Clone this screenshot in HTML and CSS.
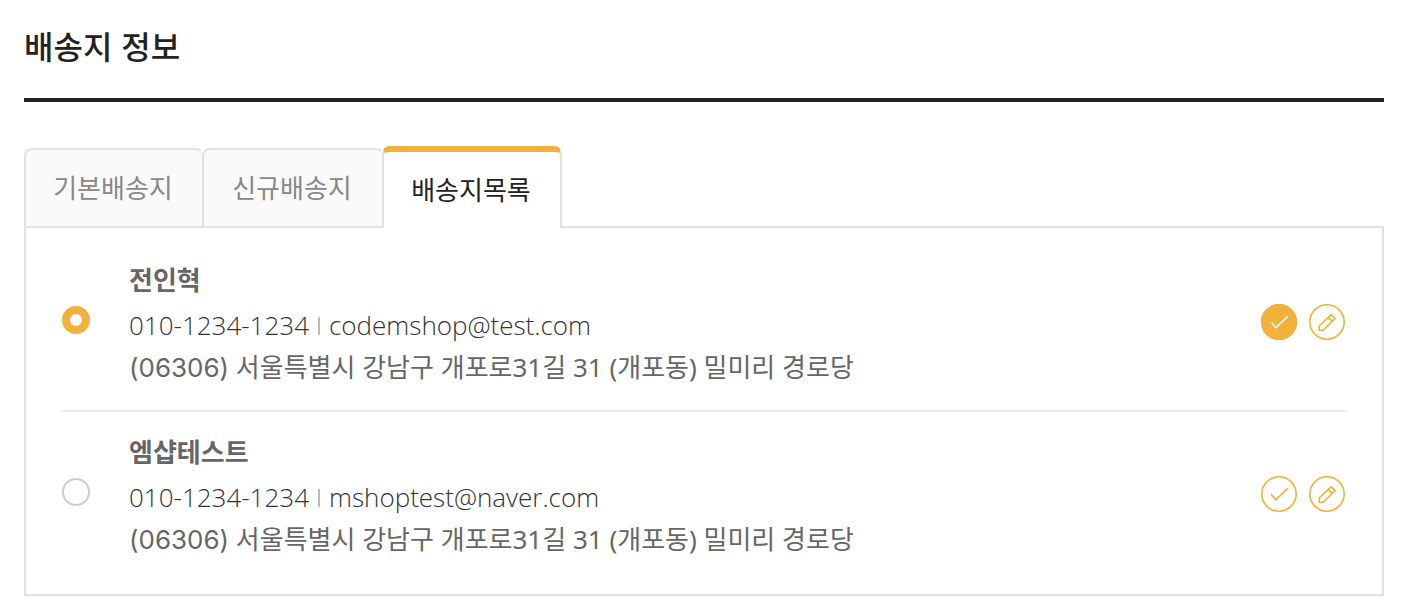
FILE: index.html
```html
<!DOCTYPE html>
<html lang="ko">
<head>
<meta charset="utf-8">
<meta name="viewport" content="width=device-width, initial-scale=1">
<title>배송지 정보</title>
<link rel="stylesheet" href="styles.css">
</head>
<body>
<svg class="symbols" aria-hidden="true">
  <symbol id="check" viewBox="0 0 36 36"><circle cx="18" cy="18" r="17.2"/><path d="M10 18.300L15 23.500L26.800 12.300"/></symbol>
  <symbol id="pencil" viewBox="0 0 36 36"><circle cx="18" cy="18" r="17.2"/><path d="M10.200 26.200V22L22.200 10.600L26.100 14.600L14.200 26.200ZM19.200 13.400L23.200 17.400"/></symbol>
</svg>
<main class="shipping">
  <h1 class="title">배송지 정보</h1>
  <div class="tabs" role="tablist">
    <button class="tab" type="button" role="tab">기본배송지</button>
    <button class="tab" type="button" role="tab">신규배송지</button>
    <button class="tab tab-active" type="button" role="tab" aria-selected="true">배송지목록</button>
  </div>
  <div class="panel" role="tabpanel">
    <div class="address">
      <input class="radio" type="radio" name="address" id="address-1" checked>
      <label class="details" for="address-1">
        <strong class="name">전인혁</strong>
        <span class="contact">010-1234-1234<span class="divider"></span>codemshop@test.com</span>
        <span class="line"><span class="postcode">(06306)</span> 서울특별시 강남구 개포로31길 31 (개포동) 밀미리 경로당</span>
      </label>
      <div class="actions">
        <button class="action action-on" type="button" aria-label="기본 배송지"><svg class="icon"><use href="#check"/></svg></button>
        <button class="action" type="button" aria-label="수정"><svg class="icon"><use href="#pencil"/></svg></button>
      </div>
    </div>
    <div class="address">
      <input class="radio" type="radio" name="address" id="address-2">
      <label class="details" for="address-2">
        <strong class="name">엠샵테스트</strong>
        <span class="contact">010-1234-1234<span class="divider"></span>mshoptest@naver.com</span>
        <span class="line"><span class="postcode">(06306)</span> 서울특별시 강남구 개포로31길 31 (개포동) 밀미리 경로당</span>
      </label>
      <div class="actions">
        <button class="action" type="button" aria-label="기본 배송지로 설정"><svg class="icon"><use href="#check"/></svg></button>
        <button class="action" type="button" aria-label="수정"><svg class="icon"><use href="#pencil"/></svg></button>
      </div>
    </div>
  </div>
</main>
</body>
</html>
```
FILE: styles.css
```css
* { box-sizing: border-box; }
body {
  margin: 0;
  background: #fff;
  color: #666;
  font: 26px/42px "Noto Sans", "Noto Sans CJK KR", sans-serif;
}
.symbols { display: none; }
.shipping { padding: 21px 22px 20px 24px; }
.title {
  margin: 0 0 44px;
  padding-bottom: 29px;
  border-bottom: 4px solid #222;
  color: #222;
  font: 500 32px/48px "Noto Sans CJK KR", sans-serif;
}
.tabs {
  position: relative;
  display: flex;
  align-items: flex-end;
  margin-bottom: -2px;
}
.tab {
  width: 180px;
  height: 80px;
  padding: 0 2px 2px 0;
  border: 2px solid #e1e1e1;
  border-right-color: transparent;
  border-radius: 8px 8px 0 0;
  background: #fafafa;
  background-clip: padding-box;
  color: #888;
  font: 26px/38px "Noto Sans CJK KR", sans-serif;
}
.tab + .tab {
  width: 182px;
  margin-left: -2px;
}
.tab + .tab-active {
  width: 180px;
  height: 82px;
  border-top: 6px solid #f1b13b;
  border-right-color: #e1e1e1;
  border-bottom: 0;
  background: #fff;
  color: #222;
}
.panel {
  padding: 12px 36px;
  border: 2px solid #e1e1e1;
}
.address {
  display: flex;
  align-items: flex-start;
  padding: 18px 0 21px;
}
.address + .address { border-top: 2px solid #ececec; }
.radio {
  appearance: none;
  flex: none;
  width: 28px;
  height: 28px;
  margin: 48px 39px 0 0;
  border: 2px solid #ccc;
  border-radius: 50%;
  background: #fff;
}
.radio:checked { border: 8px solid #f1b13b; }
.details {
  display: flex;
  flex: 1;
  flex-direction: column;
}
.name {
  margin-bottom: 4px;
  font-family: "Noto Sans CJK KR", sans-serif;
  font-weight: 700;
}
.contact {
  color: #333;
  font-family: "Open Sans", sans-serif;
  font-weight: 300;
}
.postcode { font-family: Inter, sans-serif; }
.divider {
  display: inline-block;
  width: 2px;
  height: 18px;
  margin: 0 9px;
  background: #bbb;
}
.actions {
  display: flex;
  gap: 12px;
  padding: 46px 1px 0 0;
}
.action {
  width: 36px;
  height: 36px;
  padding: 0;
  border: 0;
  border-radius: 50%;
  background: #fff;
  color: #f1b13b;
}
.action-on { background: #f1b13b; color: #fff; }
.icon {
  display: block;
  width: 36px;
  height: 36px;
  fill: none;
  stroke: currentColor;
  stroke-width: 1.6;
}
.symbols circle { stroke: #f1b13b; }
```
